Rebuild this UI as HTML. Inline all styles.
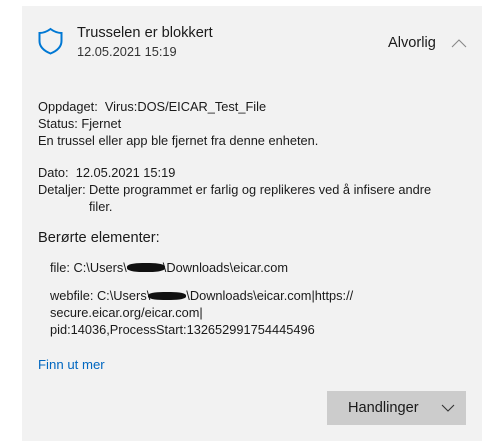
<!DOCTYPE html>
<html><head><meta charset="utf-8"><style>
body{margin:0;width:487px;height:441px;background:#fff;position:relative;overflow:hidden;font-family:"Segoe UI","Liberation Sans",sans-serif;color:#1a1a1a}
.p{position:absolute;left:22px;top:6px;width:460px;height:435px;background:#f2f2f2}
.t{position:absolute;white-space:nowrap;line-height:1}
.s{font-size:12.8px}
.l{font-size:14.6px}
.blk{position:absolute;background:#111;border-radius:40%}
</style></head><body>
<div class="p"></div>
<svg style="position:absolute;left:0;top:0" width="487" height="441">
<path d="M39.5 33 Q45 33 50.5 29 Q56 33 61.5 33 V41 Q61.5 49 50.5 53.5 Q39.5 49 39.5 41 Z" fill="none" stroke="#0078d4" stroke-width="2"/>
<path d="M452 47 L459 40 L466 47" fill="none" stroke="#888" stroke-width="1.1"/>
<rect x="327" y="391" width="139" height="34" fill="#cccccc"/>
<path d="M442 405 L448 411 L454 405" fill="none" stroke="#333" stroke-width="1.1"/>
</svg>
<div class="t l" style="left:77px;top:26px">Trusselen er blokkert</div>
<div class="t s" style="left:77px;top:46px;color:#333">12.05.2021 15:19</div>
<div class="t l" style="left:388px;top:36px">Alvorlig</div>
<div class="t s" style="left:38px;top:101px">Oppdaget:&nbsp; Virus:DOS/EICAR_Test_File</div>
<div class="t s" style="left:38px;top:118px">Status:&nbsp;Fjernet</div>
<div class="t s" style="left:38px;top:135px">En trussel eller app ble fjernet fra denne enheten.</div>
<div class="t s" style="left:38px;top:167px">Dato:&nbsp; 12.05.2021 15:19</div>
<div class="t s" style="left:38px;top:184px">Detaljer:</div>
<div class="t s" style="left:89px;top:184px">Dette programmet er farlig og replikeres ved å infisere andre</div>
<div class="t s" style="left:89px;top:201px">filer.</div>
<div class="t l" style="left:38px;top:231px">Berørte elementer:</div>
<div class="t s" style="left:50px;top:262px">file: C:\Users\<span style="display:inline-block;width:36px"></span>\Downloads\eicar.com</div>
<div class="blk" style="left:127px;top:263px;width:38px;height:9px"></div>
<div class="t s" style="left:50px;top:290px">webfile: C:\Users\<span style="display:inline-block;width:36px"></span>\Downloads\eicar.com|https://</div>
<div class="blk" style="left:148px;top:292px;width:38px;height:8px"></div>
<div class="t s" style="left:50px;top:307px">secure.eicar.org/eicar.com|</div>
<div class="t s" style="left:50px;top:324px">pid:14036,ProcessStart:132652991754445496</div>
<div class="t" style="left:38px;top:358px;font-size:13.2px;color:#0067c0">Finn ut mer</div>
<div class="t l" style="left:348px;top:401px">Handlinger</div>
</body></html>
